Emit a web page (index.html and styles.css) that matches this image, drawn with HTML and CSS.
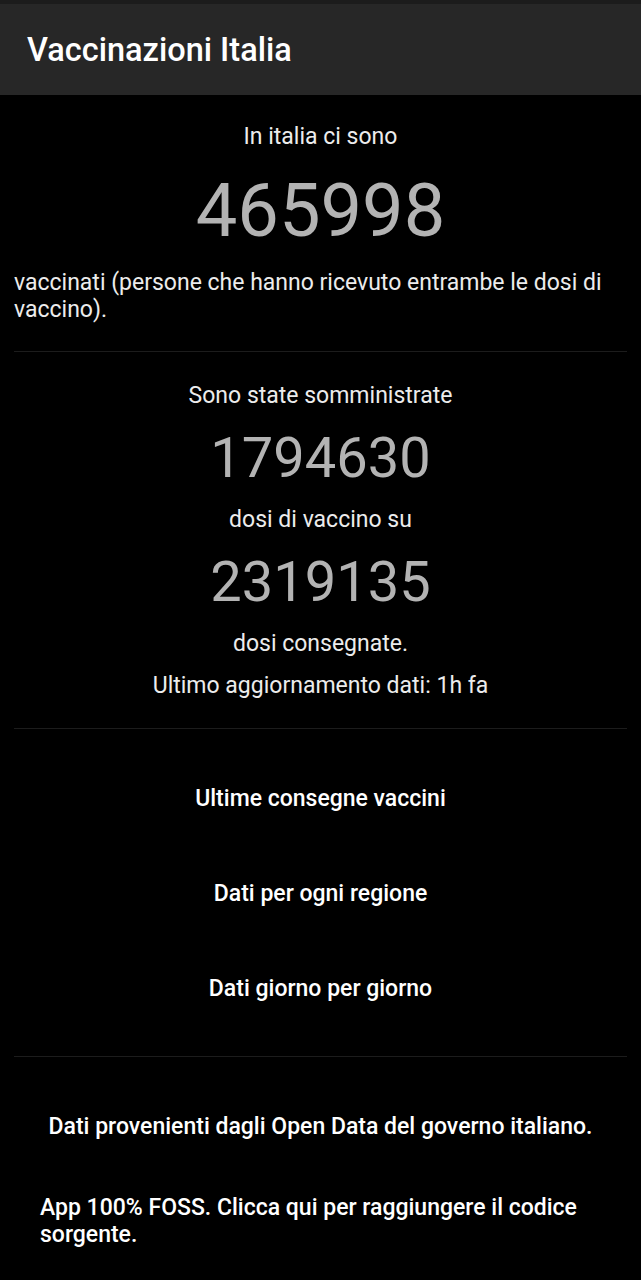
FILE: index.html
```html
<!DOCTYPE html>
<html lang="it">
<head>
<meta charset="utf-8">
<title>Vaccinazioni Italia</title>
<link rel="stylesheet" href="styles.css">
</head>
<body>
<header class="appbar">
  <h1 class="appbar-title">Vaccinazioni Italia</h1>
</header>
<main class="content">
  <section class="block block-first">
    <p class="label">In italia ci sono</p>
    <p class="big-number">465998</p>
    <p class="desc">vaccinati (persone che hanno ricevuto entrambe le dosi di vaccino).</p>
  </section>
  <hr class="divider">
  <section class="block block-doses">
    <p class="label">Sono state somministrate</p>
    <p class="mid-number">1794630</p>
    <p class="label">dosi di vaccino su</p>
    <p class="mid-number">2319135</p>
    <p class="label">dosi consegnate.</p>
    <p class="label">Ultimo aggiornamento dati: 1h fa</p>
  </section>
  <hr class="divider">
  <nav class="links">
    <a class="link-btn">Ultime consegne vaccini</a>
    <a class="link-btn">Dati per ogni regione</a>
    <a class="link-btn">Dati giorno per giorno</a>
  </nav>
  <hr class="divider">
  <footer class="footer">
    <p class="footer-source">Dati provenienti dagli Open Data del governo italiano.</p>
    <p class="footer-foss">App 100% FOSS. Clicca qui per raggiungere il codice sorgente.</p>
  </footer>
</main>
</body>
</html>
```

FILE: styles.css
```css
* { box-sizing: border-box; }
html, body {
  margin: 0;
  padding: 0;
  background: #000;
}
body {
  font-family: Roboto, "Noto Sans", sans-serif;
  color: #f2f2f2;
  width: 641px;
  min-height: 1280px;
}
p { margin: 0; }
.appbar {
  height: 95px;
  background: #272727;
  border-top: 4px solid #1c1c1c;
  display: flex;
  align-items: center;
  padding-left: 27px;
}
.appbar-title {
  margin: 0;
  font-size: 32.5px;
  font-weight: 500;
  color: #fff;
}
.content {
  padding: 0 14px;
}
.block {
  display: flex;
  flex-direction: column;
}
.block-first {
  padding-top: 27px;
  padding-bottom: 28px;
}
.label {
  text-align: center;
  font-size: 23px;
  line-height: 30px;
  color: #ececec;
}
.big-number {
  text-align: center;
  font-size: 74px;
  line-height: 90px;
  color: #b3b3b3;
  margin: 14px 0 13px;
}
.desc {
  font-size: 23px;
  line-height: 27px;
  color: #ececec;
}
.divider {
  border: 0;
  height: 1px;
  background: #1c1c1c;
  margin: 0;
}
.block-doses {
  padding-top: 29px;
  padding-bottom: 27px;
  gap: 12px;
}
.mid-number {
  text-align: center;
  font-size: 56px;
  line-height: 70px;
  color: #b3b3b3;
}
.links {
  display: flex;
  flex-direction: column;
  padding: 22px 0 20px;
}
.link-btn {
  display: block;
  text-align: center;
  font-size: 23px;
  font-weight: 500;
  line-height: 95px;
  color: #fff;
}
.footer {
  padding: 55px 26px 0;
}
.footer-source {
  text-align: center;
  font-size: 23px;
  font-weight: 500;
  line-height: 30px;
  color: #fff;
}
.footer-foss {
  margin-top: 52px;
  font-size: 23px;
  font-weight: 500;
  line-height: 27px;
  color: #fff;
}
```
